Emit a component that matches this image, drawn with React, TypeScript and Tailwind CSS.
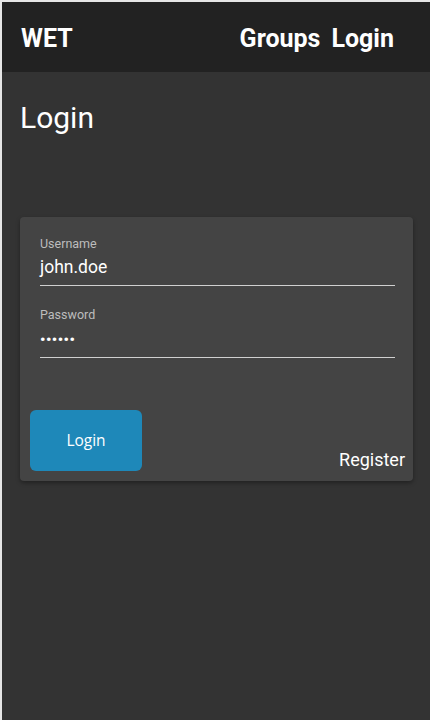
export default function App() {
  return (
    <div className="w-[430px] h-[720px] bg-[#333333] border-t-2 border-l-2 border-[#e6e6e6] flex flex-col" style={{ fontFamily: "Roboto, 'Liberation Sans', sans-serif" }}>
      <header className="h-[70px] bg-[#222222] flex items-center justify-between pl-[19px] pr-[36px] pt-[3px] text-white font-bold text-[25px] shrink-0">
        <span>WET</span>
        <nav className="flex gap-[11px]">
          <span>Groups</span>
          <span>Login</span>
        </nav>
      </header>
      <main className="flex flex-col px-[18px]">
        <h1 className="text-white text-[30px] leading-[36px] mt-[28px]">Login</h1>
        <div className="mt-[81px] mr-[-1px] bg-[#444444] rounded-[4px] shadow-[0_2px_4px_rgba(0,0,0,0.35)] flex flex-col pb-[10px]">
          <div className="px-[20px] pr-[18px] pt-[19px] flex flex-col">
            <label className="text-[#bdbdbd] text-[12.5px] leading-[15px]">Username</label>
            <div className="text-white text-[17.5px] leading-[22px] mt-[5px] pb-[7px] border-b border-[#d0d0d0]">john.doe</div>
            <label className="text-[#bdbdbd] text-[12.5px] leading-[15px] mt-[21px]">Password</label>
            <div className="text-white text-[15px] leading-[22px] mt-[7px] pb-[6px] border-b border-[#d0d0d0] tracking-[0.5px] font-bold">••••••</div>
          </div>
          <div className="flex items-end justify-between pl-[10px] pr-[8px] mt-[52px]">
            <button className="w-[112px] h-[61px] bg-[#1e88b9] rounded-[6px] text-white text-[15.5px]" style={{ fontFamily: "'Open Sans', sans-serif" }}>Login</button>
            <span className="text-white text-[18px] leading-[22px] mb-[0px]">Register</span>
          </div>
        </div>
      </main>
    </div>
  );
}
